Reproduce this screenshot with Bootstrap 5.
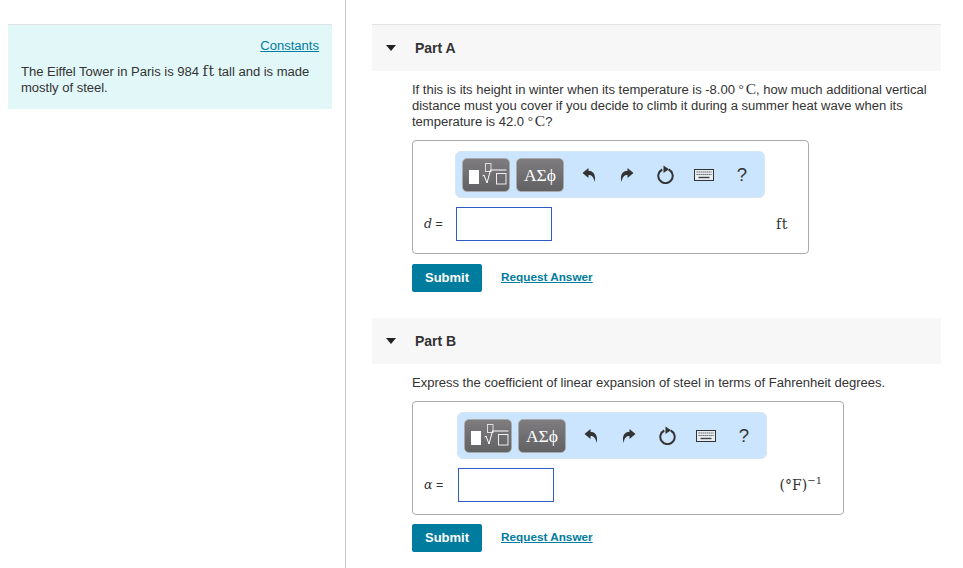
<!DOCTYPE html>
<html lang="en"><head><meta charset="utf-8"><title>Part</title>
<link href="https://cdn.jsdelivr.net/npm/bootstrap@5.3.0/dist/css/bootstrap.min.css" rel="stylesheet">
<style>
html,body{height:100%;overflow:hidden}
body{font-family:"Liberation Sans",Arial,sans-serif;font-size:13.05px;line-height:16px;color:#333;background:#fff}
.shell{height:568px}
.leftside{width:346px;border-right:1px solid #c6c9d3;padding:24px 13px 0 8px;flex:none}
.intro{background:#e2f7f7;border-top:1px solid #dde3e3;height:85px;padding:13px 13px 0}
.intro a,.reqlink{color:#007c9e}
.intro-text{margin:10px 0 0;letter-spacing:-.02px}
.rightside{padding:24px 22px 0 26px;flex:1;min-width:0}
.parthead{height:46px;background:#f7f7f7;padding-left:14px;gap:19px;font-weight:700;font-size:14px;color:#333}
.parthead.first{border-top:1px solid #e3e3e3;height:47px}
.tri{width:0;height:0;border-left:5.5px solid transparent;border-right:5.5px solid transparent;border-top:6px solid #222}
.body-part{padding:0 0 0 40px}
.prompt{margin:0;width:524px;padding-top:11px;letter-spacing:-.02px}
.mserif{font-family:"DejaVu Serif","Liberation Serif",serif;font-size:14px;letter-spacing:.6px;line-height:0}
.mt{font-family:"Liberation Serif",serif;font-size:15.5px;line-height:0}
.deg{font-size:13px;position:relative;top:-1px;margin-right:2px;line-height:0}
.ansbox{border:1px solid #aaa;border-radius:4px;height:114px;padding-top:10px;color:#333}
.box-a{width:397px;margin-top:10px}
.box-b{width:432px;margin-top:10px}
.tools{height:47px;width:310px;background:#cae5fd;border:1px solid #d6e6f2;border-radius:6px;padding:0 0 0 6px;align-items:center}
.box-a .tools{margin-left:42px}
.box-b .tools{margin-left:44px}
.gbtn{flex:none;height:34px;background:linear-gradient(#7e7c7f,#626163);border:1px solid #a9a8aa;border-radius:5px;color:#fff;display:flex;align-items:center;justify-content:center;overflow:hidden}
.gbtn.w1{width:48px;margin-right:6px}
.gbtn.w2{width:48px;font-family:"Liberation Serif",serif;font-size:17.5px}
.icons{margin-left:6px;display:flex;align-items:center;flex:none}
.ic{width:38.2px;display:flex;justify-content:center;align-items:center}
.help{font-size:18.5px;color:#333}
.inrow{margin-top:9px;height:34px}
.lbl{width:43px;padding-left:11px;flex:none;font-size:12.5px}
.box-b .lbl{width:45px}
.lbl i{font-family:"DejaVu Serif",serif;font-size:12.500px}
.anin{width:96px;height:34px;border:1px solid #2f5dc8;background:#fff;flex:none}
.unit{margin-left:auto;padding-right:20px;font-family:"DejaVu Serif",serif;font-size:14px;letter-spacing:.6px}
.box-b .unit{padding-right:21px;letter-spacing:0}
.unit sup{font-size:10px;top:-.6em}
.actions{margin-top:10px;height:28px;gap:19px}
.box-b + .actions{margin-top:9px}
.subbtn{background:#007c9e;color:#fff;font-weight:700;font-size:13px;width:70px;height:28px;padding:0;border:0;border-radius:2px;line-height:28px}
.subbtn:hover{background:#007c9e;color:#fff}
.reqlink{font-weight:700;font-size:11.75px;margin-bottom:2px}
.partb{margin-top:26px}
</style></head>
<body>
<div class="shell d-flex">
<aside class="leftside">
 <div class="intro">
  <div class="text-end"><a href="#">Constants</a></div>
  <p class="intro-text">The Eiffel Tower in Paris is 984 <span class="mserif">ft</span> tall and is made mostly of steel.</p>
 </div>
</aside>
<main class="rightside">
 <div class="parthead first d-flex align-items-center"><span class="tri"></span><span>Part A</span></div>
 <div class="body-part">
  <p class="prompt">If this is its height in winter when its temperature is -8.00 <span class="mt"><span class="deg">°</span>C</span>, how much additional vertical distance must you cover if you decide to climb it during a summer heat wave when its temperature is 42.0 <span class="mt"><span class="deg">°</span>C</span>?</p>
  <div class="ansbox box-a">
   <div class="tools d-flex">
    <div class="gbtn w1"><svg width="46" height="32" viewBox="1 1 46 32" fill="none"><rect x="7" y="12" width="10" height="14" fill="#fff"/><rect x="23.500" y="5.500" width="5.500" height="8" stroke="#ddd"/><path d="M20.500 18l1.500-1 3 8 3.500-13h16" stroke="#fff"/><rect x="34.500" y="15.500" width="9.500" height="10.500" stroke="#eee"/></svg></div>
    <div class="gbtn w2">ΑΣϕ</div>
    <div class="icons">
    <div class="ic"><svg width="14" height="16" viewBox="0 0 14 16"><path d="M6.500 1L0.500 6l6 5V8c3 0 5 1.500 6 7 1.800-7-1-11-6-11.200z" fill="#333"/></svg></div>
    <div class="ic"><svg width="14" height="16" viewBox="0 0 14 16"><path d="M7.500 1l6 5-6 5V8c-3 0-5 1.500-6 7C-.3 8 2.500 4 7.500 3.800z" fill="#333"/></svg></div>
    <div class="ic"><svg width="17" height="19" viewBox="0 0 17 19" fill="none"><path d="M5.300 4.500a7.200 7.200 0 1 0 6.400 0" stroke="#333" stroke-width="2"/><path d="M6.500 0.500l5.500 3.700L6.500 8z" fill="#333"/></svg></div>
    <div class="ic"><svg width="20" height="12" viewBox="0 0 20 12" fill="none"><rect x=".5" y=".5" width="19" height="11" fill="#e6edf2" stroke="#333"/><path d="M2.500 3h15M2.500 5.500h15" stroke="#555" stroke-width="1.200" stroke-dasharray="1.300 .7"/><path d="M4.500 8.500h11" stroke="#444" stroke-width="1.400"/></svg></div>
    <div class="ic help">?</div>
    </div>
   </div>
   <div class="inrow d-flex align-items-center">
    <div class="lbl"><i>d</i> =</div><div class="anin" role="textbox"></div><div class="unit">ft</div>
   </div>
  </div>
  <div class="actions d-flex align-items-center"><button class="btn subbtn">Submit</button><a class="reqlink" href="#">Request Answer</a></div>
 </div>
 <div class="parthead partb d-flex align-items-center"><span class="tri"></span><span>Part B</span></div>
 <div class="body-part">
  <p class="prompt">Express the coefficient of linear expansion of steel in terms of Fahrenheit degrees.</p>
  <div class="ansbox box-b">
   <div class="tools d-flex">
    <div class="gbtn w1"><svg width="46" height="32" viewBox="1 1 46 32" fill="none"><rect x="7" y="12" width="10" height="14" fill="#fff"/><rect x="23.500" y="5.500" width="5.500" height="8" stroke="#ddd"/><path d="M20.500 18l1.500-1 3 8 3.500-13h16" stroke="#fff"/><rect x="34.500" y="15.500" width="9.500" height="10.500" stroke="#eee"/></svg></div>
    <div class="gbtn w2">ΑΣϕ</div>
    <div class="icons">
    <div class="ic"><svg width="14" height="16" viewBox="0 0 14 16"><path d="M6.500 1L0.500 6l6 5V8c3 0 5 1.500 6 7 1.800-7-1-11-6-11.200z" fill="#333"/></svg></div>
    <div class="ic"><svg width="14" height="16" viewBox="0 0 14 16"><path d="M7.500 1l6 5-6 5V8c-3 0-5 1.500-6 7C-.3 8 2.500 4 7.500 3.800z" fill="#333"/></svg></div>
    <div class="ic"><svg width="17" height="19" viewBox="0 0 17 19" fill="none"><path d="M5.300 4.500a7.200 7.200 0 1 0 6.400 0" stroke="#333" stroke-width="2"/><path d="M6.500 0.500l5.500 3.700L6.500 8z" fill="#333"/></svg></div>
    <div class="ic"><svg width="20" height="12" viewBox="0 0 20 12" fill="none"><rect x=".5" y=".5" width="19" height="11" fill="#e6edf2" stroke="#333"/><path d="M2.500 3h15M2.500 5.500h15" stroke="#555" stroke-width="1.200" stroke-dasharray="1.300 .7"/><path d="M4.500 8.500h11" stroke="#444" stroke-width="1.400"/></svg></div>
    <div class="ic help">?</div>
    </div>
   </div>
   <div class="inrow d-flex align-items-center">
    <div class="lbl"><i>α</i> =</div><div class="anin" role="textbox"></div><div class="unit">(°F)<sup>−1</sup></div>
   </div>
  </div>
  <div class="actions d-flex align-items-center"><button class="btn subbtn">Submit</button><a class="reqlink" href="#">Request Answer</a></div>
 </div>
</main>
</div>
<script src="https://cdn.jsdelivr.net/npm/bootstrap@5.3.0/dist/js/bootstrap.bundle.min.js"></script>
</body></html>
